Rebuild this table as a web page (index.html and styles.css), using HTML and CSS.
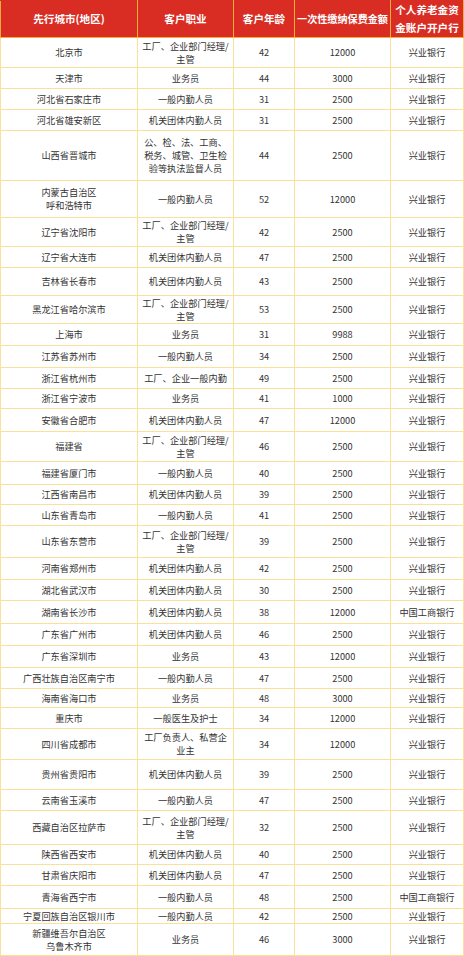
FILE: index.html
```html
<!DOCTYPE html>
<html lang="zh">
<head>
<meta charset="utf-8">
<link rel="stylesheet" href="styles.css">
</head>
<body>
<table class="tbl">
<colgroup>
<col class="c1"><col class="c2"><col class="c3"><col class="c4"><col class="c5">
</colgroup>
<thead>
<tr class="head">
<th>先行城市(地区)</th><th>客户职业</th><th>客户年龄</th><th class="narrow">一次性缴纳保费金额</th><th>个人养老金资<br>金账户开户行</th>
</tr>
</thead>
<tbody>
<tr class="h30"><td>北京市</td><td>工厂、企业部门经理/<br>主管</td><td>42</td><td>12000</td><td>兴业银行</td></tr>
<tr class="h21"><td>天津市</td><td>业务员</td><td>44</td><td>3000</td><td>兴业银行</td></tr>
<tr class="h21"><td>河北省石家庄市</td><td>一般内勤人员</td><td>31</td><td>2500</td><td>兴业银行</td></tr>
<tr class="h21"><td>河北省雄安新区</td><td>机关团体内勤人员</td><td>31</td><td>2500</td><td>兴业银行</td></tr>
<tr class="h50"><td>山西省晋城市</td><td>公、检、法、工商、<br>税务、城管、卫生检<br>验等执法监督人员</td><td>44</td><td>2500</td><td>兴业银行</td></tr>
<tr class="h37"><td>内蒙古自治区<br>呼和浩特市</td><td>一般内勤人员</td><td>52</td><td>12000</td><td>兴业银行</td></tr>
<tr class="h29"><td>辽宁省沈阳市</td><td>工厂、企业部门经理/<br>主管</td><td>42</td><td>2500</td><td>兴业银行</td></tr>
<tr class="h21"><td>辽宁省大连市</td><td>机关团体内勤人员</td><td>47</td><td>2500</td><td>兴业银行</td></tr>
<tr class="h28"><td>吉林省长春市</td><td>机关团体内勤人员</td><td>43</td><td>2500</td><td>兴业银行</td></tr>
<tr class="h28"><td>黑龙江省哈尔滨市</td><td>工厂、企业部门经理/<br>主管</td><td>53</td><td>2500</td><td>兴业银行</td></tr>
<tr class="h22"><td>上海市</td><td>业务员</td><td>31</td><td>9988</td><td>兴业银行</td></tr>
<tr class="h22"><td>江苏省苏州市</td><td>一般内勤人员</td><td>34</td><td>2500</td><td>兴业银行</td></tr>
<tr class="h21"><td>浙江省杭州市</td><td>工厂、企业一般内勤</td><td>49</td><td>2500</td><td>兴业银行</td></tr>
<tr class="h20"><td>浙江省宁波市</td><td>业务员</td><td>41</td><td>1000</td><td>兴业银行</td></tr>
<tr class="h23"><td>安徽省合肥市</td><td>机关团体内勤人员</td><td>47</td><td>12000</td><td>兴业银行</td></tr>
<tr class="h30"><td>福建省</td><td>工厂、企业部门经理/<br>主管</td><td>46</td><td>2500</td><td>兴业银行</td></tr>
<tr class="h23"><td>福建省厦门市</td><td>一般内勤人员</td><td>40</td><td>2500</td><td>兴业银行</td></tr>
<tr class="h20"><td>江西省南昌市</td><td>机关团体内勤人员</td><td>39</td><td>2500</td><td>兴业银行</td></tr>
<tr class="h21"><td>山东省青岛市</td><td>一般内勤人员</td><td>41</td><td>2500</td><td>兴业银行</td></tr>
<tr class="h32"><td>山东省东营市</td><td>工厂、企业部门经理/<br>主管</td><td>39</td><td>2500</td><td>兴业银行</td></tr>
<tr class="h22"><td>河南省郑州市</td><td>机关团体内勤人员</td><td>42</td><td>2500</td><td>兴业银行</td></tr>
<tr class="h21"><td>湖北省武汉市</td><td>机关团体内勤人员</td><td>30</td><td>2500</td><td>兴业银行</td></tr>
<tr class="h23"><td>湖南省长沙市</td><td>机关团体内勤人员</td><td>38</td><td>12000</td><td>中国工商银行</td></tr>
<tr class="h22"><td>广东省广州市</td><td>机关团体内勤人员</td><td>46</td><td>2500</td><td>兴业银行</td></tr>
<tr class="h22"><td>广东省深圳市</td><td>业务员</td><td>43</td><td>12000</td><td>兴业银行</td></tr>
<tr class="h21"><td>广西壮族自治区南宁市</td><td>一般内勤人员</td><td>47</td><td>2500</td><td>兴业银行</td></tr>
<tr class="h19"><td>海南省海口市</td><td>业务员</td><td>48</td><td>3000</td><td>兴业银行</td></tr>
<tr class="h21"><td>重庆市</td><td>一般医生及护士</td><td>34</td><td>12000</td><td>兴业银行</td></tr>
<tr class="h31"><td>四川省成都市</td><td>工厂负责人、私营企<br>业主</td><td>34</td><td>12000</td><td>兴业银行</td></tr>
<tr class="h30"><td>贵州省贵阳市</td><td>机关团体内勤人员</td><td>39</td><td>2500</td><td>兴业银行</td></tr>
<tr class="h21"><td>云南省玉溪市</td><td>一般内勤人员</td><td>47</td><td>2500</td><td>兴业银行</td></tr>
<tr class="h34"><td>西藏自治区拉萨市</td><td>工厂、企业部门经理/<br>主管</td><td>32</td><td>2500</td><td>兴业银行</td></tr>
<tr class="h20"><td>陕西省西安市</td><td>机关团体内勤人员</td><td>40</td><td>2500</td><td>兴业银行</td></tr>
<tr class="h21"><td>甘肃省庆阳市</td><td>机关团体内勤人员</td><td>47</td><td>2500</td><td>兴业银行</td></tr>
<tr class="h23"><td>青海省西宁市</td><td>一般内勤人员</td><td>48</td><td>2500</td><td>中国工商银行</td></tr>
<tr class="h15"><td>宁夏回族自治区银川市</td><td>一般内勤人员</td><td>42</td><td>2500</td><td>兴业银行</td></tr>
<tr class="h32"><td>新疆维吾尔自治区<br>乌鲁木齐市</td><td>业务员</td><td>46</td><td>3000</td><td>兴业银行</td></tr>
</tbody>
</table>
</body>
</html>
```

FILE: styles.css
```css
html, body {
  margin: 0;
  padding: 0;
  background: #ffffff;
}

.tbl {
  border-collapse: collapse;
  table-layout: fixed;
  width: 463px;
  font-family: "Noto Sans CJK SC", "Noto Sans", sans-serif;
  color: #333333;
}

.c1 { width: 137px; }
.c2 { width: 96px; }
.c3 { width: 61px; }
.c4 { width: 96px; }
.c5 { width: 73px; }

.tbl th,
.tbl td {
  padding: 0;
  text-align: center;
  vertical-align: middle;
  overflow: hidden;
  white-space: nowrap;
}

.head {
  height: 36px;
}

.tbl th {
  background: #d92d24;
  color: #ffffff;
  font-weight: 700;
  font-size: 10.6px;
  line-height: 18px;
  border: 1px solid #f3ad3c;
  border-top-color: #d92d24;
}

.tbl th.narrow {
  font-size: 10.1px;
}

.tbl td {
  border: 1px solid #fbe09a;
  font-size: 9.2px;
  line-height: 13px;
}

.h15 { height: 15px; }
.h19 { height: 19px; }
.h20 { height: 20px; }
.h21 { height: 21px; }
.h22 { height: 22px; }
.h23 { height: 23px; }
.h28 { height: 28px; }
.h29 { height: 29px; }
.h30 { height: 30px; }
.h31 { height: 31px; }
.h32 { height: 32px; }
.h34 { height: 34px; }
.h37 { height: 37px; }
.h50 { height: 50px; }
```
